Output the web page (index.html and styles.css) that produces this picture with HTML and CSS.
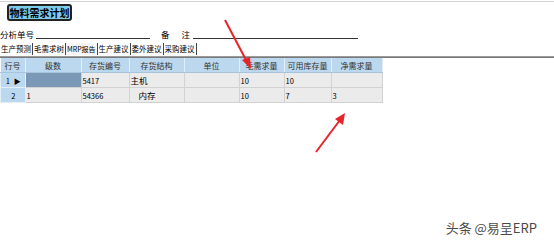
FILE: index.html
```html
<!DOCTYPE html>
<html>
<head>
    <title>物料需求计划</title>
    <link rel="stylesheet" href="styles.css">
</head>
<body>
    <div class="window">
        <div class="title-bar">
            <span class="title">物料需求计划</span>
        </div>
        <div class="form-row">
            <span class="label">分析单号</span>
            <span class="field field-no"></span>
            <span class="label label-note">备</span>
            <span class="label label-note2">注</span>
            <span class="field field-note"></span>
        </div>
        <div class="tabs">
            <span class="tab">生产预测</span>
            <span class="tab">毛需求树</span>
            <span class="tab active">MRP报告</span>
            <span class="tab">生产建议</span>
            <span class="tab">委外建议</span>
            <span class="tab">采购建议</span>
        </div>
        <div class="grid-area">
            <table class="grid">
                <thead>
                    <tr>
                        <th class="c-no">行号</th>
                        <th class="c-lvl">级数</th>
                        <th class="c-code">存货编号</th>
                        <th class="c-struct">存货结构</th>
                        <th class="c-unit">单位</th>
                        <th class="c-gross">毛需求量</th>
                        <th class="c-avail">可用库存量</th>
                        <th class="c-net">净需求量</th>
                    </tr>
                </thead>
                <tbody>
                    <tr>
                        <td class="row-no">1 <span class="marker">&#9654;</span></td>
                        <td class="selected"></td>
                        <td>5417</td>
                        <td class="struct">主机</td>
                        <td></td>
                        <td>10</td>
                        <td>10</td>
                        <td></td>
                    </tr>
                    <tr>
                        <td class="row-no">2</td>
                        <td>1</td>
                        <td>54366</td>
                        <td class="struct indent">内存</td>
                        <td></td>
                        <td>10</td>
                        <td>7</td>
                        <td>3</td>
                    </tr>
                </tbody>
            </table>
        </div>
    </div>

    <svg class="arrows" width="554" height="244" viewBox="0 0 554 244">
        <line x1="225" y1="20" x2="246" y2="60" stroke="#e8242a" stroke-width="2"/>
        <polygon points="251,69 242,60 250,57" fill="#e8242a"/>
        <line x1="316" y1="152" x2="340" y2="120" stroke="#e8242a" stroke-width="2"/>
        <polygon points="345,113 343,125 335,119" fill="#e8242a"/>
    </svg>

    <div class="watermark">头条 @易呈ERP</div>
</body>
</html>
```

FILE: styles.css
```css
body {
    margin: 0;
    width: 554px;
    height: 244px;
    background: #ffffff;
    font-family: "Noto Sans CJK SC", "Liberation Sans", sans-serif;
    font-size: 9px;
    color: #000;
    position: relative;
    overflow: hidden;
}

.window {
    border-top: 1px solid #d4d4d4;
    margin-top: 1px;
}

.title-bar {
    height: 20px;
    padding: 2px 0 0 7px;
    box-sizing: border-box;
}

.title {
    display: inline-block;
    width: 65px;
    height: 17px;
    box-sizing: border-box;
    background: #7ecbec;
    border: 2px solid #222;
    border-radius: 3px;
    font-size: 10px;
    font-weight: bold;
    line-height: 13px;
    text-align: center;
    white-space: nowrap;
}

.form-row {
    display: flex;
    align-items: flex-end;
    height: 18px;
}

.label {
    line-height: 12px;
    font-size: 8.5px;
}

.field {
    display: inline-block;
    height: 1px;
    background: #333;
    margin-bottom: 1px;
}

.field-no {
    width: 114px;
    margin-left: 2px;
}

.label-note {
    margin-left: 11px;
}

.label-note2 {
    margin-left: 12px;
}

.field-note {
    width: 165px;
    margin-left: 3px;
}

.tabs {
    display: flex;
    height: 13px;
    margin-top: 3px;
    border-bottom: 1px solid #9a9a9a;
}

.tab {
    padding: 0 1px;
    border-right: 1px solid #444;
    line-height: 12px;
    height: 12px;
    font-size: 7.5px;
}

.tab.active {
    background: #f6f6f6;
    font-size: 7px;
}

.grid-area {
    border-top: 1px solid #7a7a7a;
}

.grid {
    border-collapse: collapse;
    table-layout: fixed;
}

.grid th {
    background: #bcd8ee;
    color: #333;
    font-weight: normal;
    height: 14px;
    padding: 0;
    border-right: 1px solid #e4eef6;
    border-bottom: 1px solid #a8c4dc;
    text-align: center;
    font-size: 8px;
}

.grid td {
    background: #ebebeb;
    height: 14px;
    padding: 0 0 0 1px;
    border: 1px solid #d2d2d2;
    font-size: 7.5px;
    white-space: nowrap;
    overflow: hidden;
}

.grid td.struct {
    font-size: 8.5px;
}

.grid td.indent {
    padding-left: 9px;
}

.grid td.row-no {
    background: #bcd8ee;
    text-align: center;
    border-color: #e4eef6;
}

.grid td.selected {
    background: #7b98b6;
}

.marker {
    font-size: 7px;
    margin-left: 2px;
}

.c-no { width: 24px; }
.c-lvl { width: 55px; }
.c-code { width: 47px; }
.c-struct { width: 54px; }
.c-unit { width: 54px; }
.c-gross { width: 44px; }
.c-avail { width: 46px; }
.c-net { width: 50px; }

.arrows {
    position: absolute;
    left: 0;
    top: 0;
    pointer-events: none;
}

.watermark {
    position: absolute;
    right: 17px;
    bottom: 7px;
    font-size: 13px;
    color: #4a4a4a;
}
```
